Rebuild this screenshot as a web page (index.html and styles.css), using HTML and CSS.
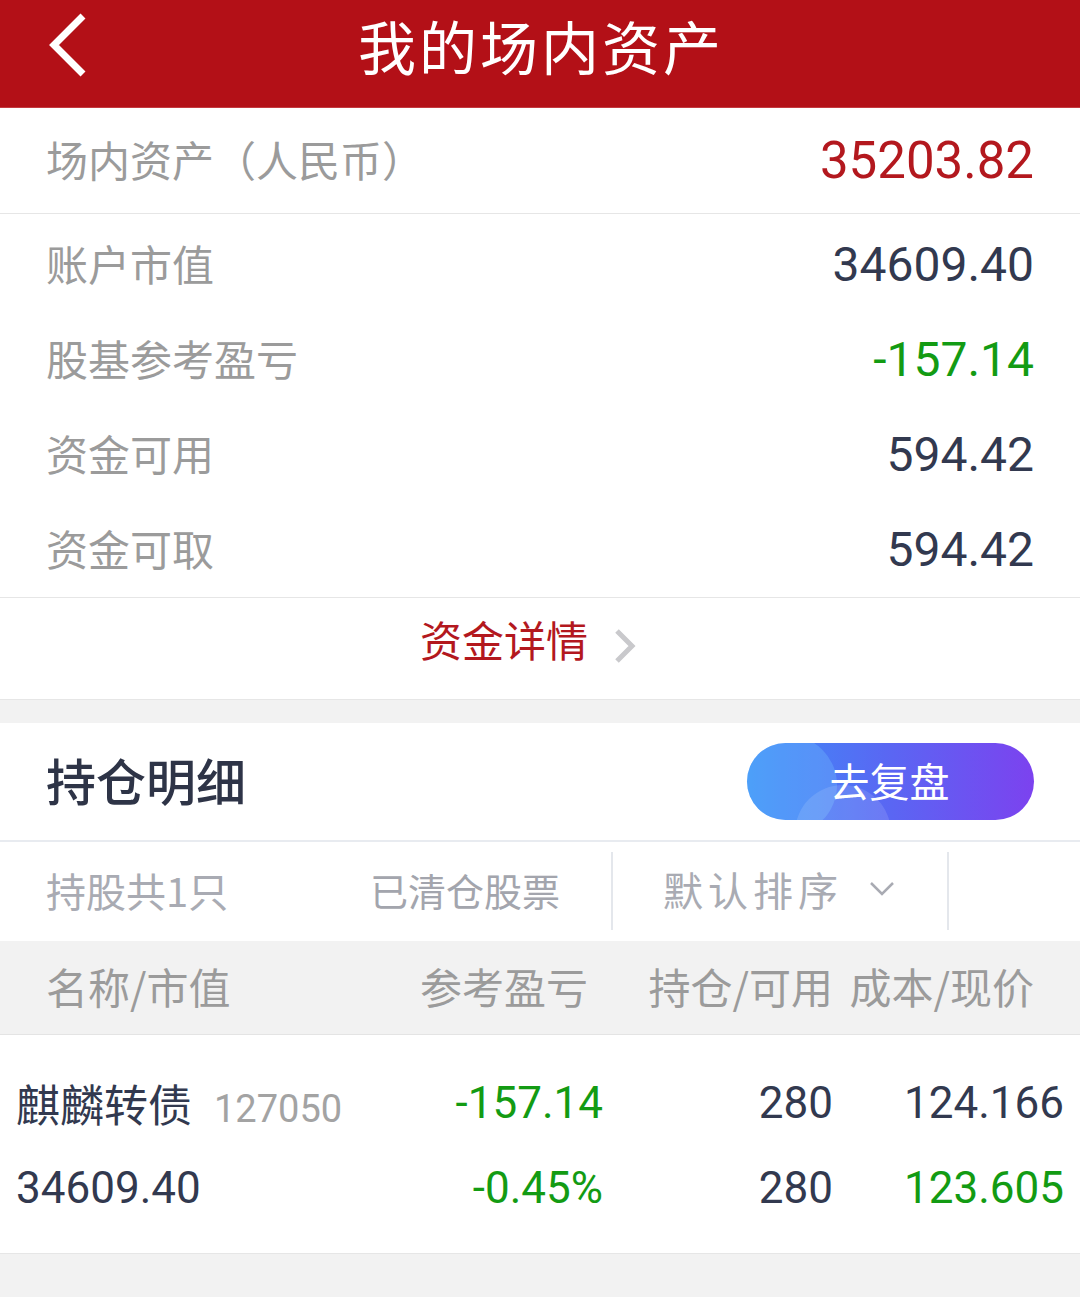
FILE: index.html
```html
<!DOCTYPE html>
<html lang="zh-CN">
<head>
	<meta charset="UTF-8">
	<title>我的场内资产</title>
	<link rel="stylesheet" href="styles.css">
</head>
<body>
	<div class="topbar">
		<svg class="back" width="40" height="66" viewBox="0 0 40 66">
			<polyline points="34,4 5,33 34,62" fill="none" stroke="#fff" stroke-width="7"/>
		</svg>
		<h1>我的场内资产</h1>
	</div>

	<div class="total">
		<span class="label">场内资产（人民币）</span>
		<span class="total-num">35203.82</span>
	</div>

	<div class="summary">
		<div class="line"><span class="label">账户市值</span><span class="num">34609.40</span></div>
		<div class="line"><span class="label">股基参考盈亏</span><span class="num green">-157.14</span></div>
		<div class="line"><span class="label">资金可用</span><span class="num">594.42</span></div>
		<div class="line"><span class="label">资金可取</span><span class="num">594.42</span></div>
	</div>

	<div class="detail-link">
		<span>资金详情</span>
		<svg width="26" height="38" viewBox="0 0 26 38">
			<polyline points="5,4 20,19 5,34" fill="none" stroke="#c9c9cc" stroke-width="5"/>
		</svg>
	</div>

	<div class="hold">
		<div class="hold-head">
			<h2>持仓明细</h2>
			<div class="replay"><span>去复盘</span></div>
		</div>
		<div class="tabs">
			<div class="tab tab-count">持股共1只</div>
			<div class="tab tab-clear">已清仓股票</div>
			<div class="tab tab-sort">默认排序
				<svg width="26" height="16" viewBox="0 0 26 16">
					<polyline points="2,2 13,13 24,2" fill="none" stroke="#a9abb3" stroke-width="2.5"/>
				</svg>
			</div>
		</div>
		<div class="cols">
			<span>名称/市值</span>
			<span class="r">参考盈亏</span>
			<span class="r">持仓/可用</span>
			<span class="r">成本/现价</span>
		</div>
		<div class="stock">
			<div class="srow">
				<span class="name">麒麟转债<em>127050</em></span>
				<span class="r green">-157.14</span>
				<span class="r">280</span>
				<span class="r">124.166</span>
			</div>
			<div class="srow">
				<span class="mv">34609.40</span>
				<span class="r green">-0.45%</span>
				<span class="r">280</span>
				<span class="r green">123.605</span>
			</div>
		</div>
	</div>
</body>
</html>
```

FILE: styles.css
```css
body{
	margin: 0;
	background: #f2f2f2;
	font-family: "Noto Sans CJK SC", Roboto, sans-serif;
	color: #32394f;
}
.topbar{
	height: 107px;
	background: #b31017;
	border-bottom: 1px solid #c43a40;
	display: flex;
	align-items: center;
	justify-content: center;
	position: relative;
}
.back{
	position: absolute;
	left: 49px;
	top: 12px;
}
.topbar h1{
	margin: 0 0 18px 2px;
	font-size: 58px;
	font-weight: normal;
	letter-spacing: 3px;
	color: #fff;
}
.label{
	font-size: 42px;
	color: #9b9b9b;
	margin-bottom: 5px;
}
.num,
.total-num,
.srow,
.replay{
	font-family: Roboto, "Noto Sans CJK SC", sans-serif;
}
.total{
	height: 105px;
	background: #fff;
	border-bottom: 1px solid #e6e6e6;
	display: flex;
	align-items: center;
	justify-content: space-between;
	padding: 0 46px;
}
.total-num{
	font-size: 51px;
	color: #b3181e;
}
.summary{
	background: #fff;
	padding: 3px 46px 0;
	border-bottom: 1px solid #e6e6e6;
}
.line{
	height: 95px;
	display: flex;
	align-items: center;
	justify-content: space-between;
}
.num{
	font-size: 48px;
	color: #32394f;
}
.green{
	color: #139b13 !important;
}
.detail-link{
	height: 101px;
	background: #fff;
	border-bottom: 1px solid #e6e6e6;
	display: flex;
	align-items: center;
	justify-content: center;
	gap: 24px;
	padding-right: 22px;
	font-size: 42px;
	color: #b3181e;
}
.detail-link span{
	margin-top: -20px;
}
.detail-link svg{
	margin-top: -6px;
}
.hold{
	margin-top: 23px;
	background: #fff;
	border-bottom: 1px solid #e6e6e6;
}
.hold-head{
	height: 117px;
	display: flex;
	align-items: center;
	justify-content: space-between;
	padding: 0 46px;
	border-bottom: 2px solid #e8ebf0;
}
.hold-head h2{
	margin: 0 0 6px;
	font-size: 50px;
	font-weight: 500;
	color: #2e3447;
}
.replay{
	position: relative;
	overflow: hidden;
	width: 287px;
	height: 77px;
	border-radius: 39px;
	background: linear-gradient(90deg, #3b8ff7 0%, #5a66f3 50%, #7c42ef 100%);
	display: flex;
	align-items: center;
	justify-content: center;
	font-size: 40px;
	color: #fff;
	font-family: "Noto Sans CJK SC", sans-serif;
}
.replay::before{
	content: "";
	position: absolute;
	left: -10px;
	top: -8px;
	width: 100px;
	height: 100px;
	border-radius: 50%;
	background: rgba(120, 200, 255, 0.3);
}
.replay::after{
	content: "";
	position: absolute;
	left: 48px;
	top: 42px;
	width: 96px;
	height: 96px;
	border-radius: 50%;
	background: rgba(255, 255, 255, 0.12);
}
.replay span{
	position: relative;
	z-index: 1;
	margin: 0 0 4px -2px;
}
.tabs{
	height: 99px;
	display: flex;
	align-items: center;
	padding-left: 46px;
}
.tab{
	font-size: 40px;
	color: #a9abb3;
}
.tab-count,
.tab-clear{
	margin-bottom: 4px;
}
.tab-count{
	width: 324px;
}
.tab-clear{
	width: 241px;
	font-size: 38px;
	color: #a3a5ad;
}
.tab-sort{
	width: 284px;
	height: 74px;
	padding-left: 50px;
	padding-bottom: 4px;
	box-sizing: content-box;
	border-left: 2px solid #e4e7ec;
	border-right: 2px solid #e4e7ec;
	display: flex;
	align-items: center;
	letter-spacing: 5px;
	margin-bottom: 2px;
}
.tab-sort svg{
	margin-left: 26px;
}
.cols{
	height: 93px;
	background: #f2f2f2;
	border-bottom: 1px solid #e4e4e4;
	display: grid;
	grid-template-columns: 300px 242px 245px 201px;
	align-items: center;
	padding: 0 46px;
	font-size: 42px;
	color: #9b9b9b;
}
.cols span{
	margin-bottom: 5px;
}
.r{
	text-align: right;
}
.stock{
	padding: 25px 16px 23px;
}
.srow{
	height: 85px;
	display: grid;
	grid-template-columns: 350px 237px 230px 231px;
	align-items: center;
	font-size: 44px;
	color: #32394f;
}
.name{
	font-family: "Noto Sans CJK SC", sans-serif;
	font-size: 44px;
}
.name em{
	font-style: normal;
	font-family: Roboto, sans-serif;
	font-size: 38px;
	color: #a3a3a3;
	margin-left: 22px;
}
```
